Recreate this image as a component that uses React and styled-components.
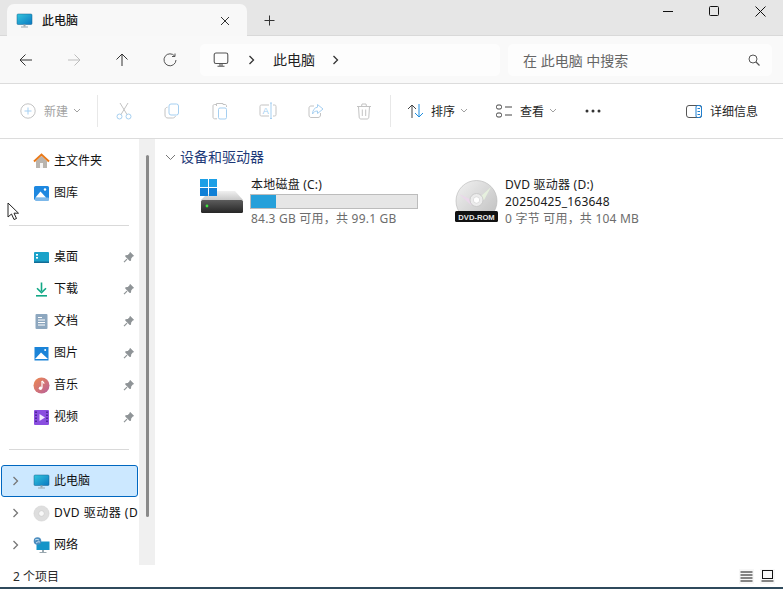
import React from 'react';
import styled, { createGlobalStyle } from 'styled-components';

const Global = createGlobalStyle`
  html, body { margin: 0; padding: 0; height: 100%; overflow: hidden; background: #fff; }
  #root { height: 100%; }
  * { box-sizing: border-box; }
  body { font-family: "Noto Sans", "Noto Sans CJK SC", sans-serif; font-size: 12px; color: #1a1a1a; }
`;

const Win = styled.div`
  position: relative; width: 783px; height: 589px; display: flex; flex-direction: column; overflow: hidden; background: #fff;
`;
const TitleBar = styled.div`
  height: 36px; background: #e6e6e6; border-bottom: 1px solid #d9d9d9; display: flex; align-items: flex-end; padding-left: 7px;
`;
const Tab = styled.div`
  width: 240px; height: 32px; margin-bottom: -1px; background: #f8f8f8; border-radius: 7px 7px 0 0;
  display: flex; align-items: center; padding: 1px 17px 0 9px; gap: 9px; font-size: 12px; color: #1a1a1a; font-weight: 500;
`;
const TabTitle = styled.span`flex: 1; line-height: 16px;`;
const NewTab = styled.div`
  width: 44px; height: 30px; display: flex; align-items: center; justify-content: center; padding-top: 1px;
`;
const WinControls = styled.div`
  margin-left: auto; align-self: flex-start; display: flex; padding-top: 2px;
`;
const WinBtn = styled.div`
  width: 46px; height: 18px; display: flex; align-items: center; justify-content: center;
`;
const NavBar = styled.div`
  height: 48px; background: #f9f9f9; border-bottom: 1px solid #dcdcdc; display: flex; align-items: center; padding: 1px 11px 0 2px;
`;
const NavBtn = styled.div`
  width: 48px; height: 32px; display: flex; align-items: center; justify-content: center;
`;
const Crumbs = styled.div`
  margin-left: 6px; width: 300px; height: 32px; background: #fdfdfd; border-radius: 5px; display: flex; align-items: center; padding-left: 13px;
  font-size: 14px; color: #1f1f1f;
`;
const CrumbText = styled.span`margin: 0 17px 0 18px; line-height: 18px;`;
const CrumbChevron = styled.span`display: flex; margin-left: 19px;`;
const Search = styled.div`
  margin-left: 8px; flex: 1; height: 32px; background: #fdfdfd; border-radius: 5px; display: flex; align-items: center; justify-content: space-between;
  padding: 0 12px 0 15px; color: #666; font-size: 14px;
`;
const CommandBar = styled.div`
  height: 55px; background: #fff; border-bottom: 1px solid #dcdcdc; display: flex; align-items: center; padding: 0 25px 0 20px;
`;
const CmdLabel = styled.span`
  font-size: 12px; line-height: 16px; color: ${p => p.$off ? '#a3a3a3' : '#262626'}; margin: 2px 0 0 ${p => p.$ml || 7}px; white-space: nowrap;
`;
const CmdGroup = styled.div`display: flex; align-items: center; margin-left: ${p => p.$ml || 0}px;`;
const CmdIcon = styled.div`
  width: 48px; display: flex; align-items: center; justify-content: center;
`;
const Sep = styled.div`width: 1px; height: 32px; background: #e8e8e8; margin: ${p => p.$m};`;
const Caret = styled.span`display: flex; margin-left: 5px;`;
const Spacer = styled.div`flex: 1;`;
const Body = styled.div`flex: 1; display: flex; min-height: 0; background: #fff;`;
const Side = styled.div`
  width: 139px; padding: 6px 1px 0 1px; display: flex; flex-direction: column; overflow: hidden;
`;
const Row = styled.div`
  height: 32px; flex: none; display: flex; align-items: center; padding-left: ${p => p.$tree ? 11 : 32}px; padding-right: 3px; border-radius: 3px;
  font-size: 12px; color: #111; white-space: nowrap; overflow: hidden;
  ${p => p.$sel && 'background:#cce8ff; border:1px solid #0067c0; padding-left:10px;'}
`;
const TreeRow = styled(Row)`padding-right: 0;`;
const RowIcon = styled.span`width: 17px; height: 17px; display: flex; align-items: center; justify-content: center; flex: none; margin-right: 4px;`;
const RowLabel = styled.span`flex: 1; line-height: 16px; overflow: hidden; letter-spacing: ${p => p.$wide ? '.5px' : '0'};`;
const Chevron = styled.span`width: 21px; display: flex; flex: none;`;
const Pin = styled.span`display: flex; justify-content: flex-end; width: 14px; flex: none;`;
const Divider = styled.div`height: 1px; background: #d9d9d9; margin: ${p => p.$m}; flex: none;`;
const Track = styled.div`
  width: 16px; background: #f0f0f0; display: flex; justify-content: center; padding-top: 16px;
`;
const Thumb = styled.div`width: 3px; height: 362px; background: #8a8a8a; border-radius: 2px;`;
const Content = styled.div`flex: 1; padding: 9px 0 0 10px; display: flex; flex-direction: column;`;
const GroupHead = styled.div`
  display: flex; align-items: center; color: #1e3a78; font-size: 14px; line-height: 18px; gap: 4px;
`;
const Drives = styled.div`display: flex; padding: 10px 0 0 35px;`;
const Drive = styled.div`display: flex; width: ${p => p.$w}px; gap: ${p => p.$gap}px;`;
const DriveGlyph = styled.div`flex: none; padding-top: ${p => p.$top}px; display: flex; align-items: flex-start;`;
const DriveInfo = styled.div`display: flex; flex-direction: column; font-size: 12px; line-height: 17px; color: #1a1a1a; letter-spacing: .22px;`;
const Bar = styled.div`
  width: 168px; height: 15px; background: #e6e6e6; border: 1px solid #bcbcbc; margin: 1px 0 1px -1px;
`;
const Fill = styled.div`height: 100%; background: #26a0da;`;
const Muted = styled.span`color: #6d6d6d;`;
const Status = styled.div`
  height: 24px; background: #fff; border-bottom: 2px solid #2f4a5c; display: flex; align-items: center; justify-content: space-between; padding: 0 8px 0 13px;
  font-size: 12px; color: #2a2a2a;
`;
const StatusIcons = styled.div`display: flex; gap: 6px; align-items: center;`;
const ViewBtn = styled.span`display: flex; width: 15px; height: 15px; background: #f7f7f7; align-items: center; justify-content: center;`;
const Cursor = styled.svg`position: absolute; left: 7px; top: 202px;`;

const S = ({ w = 16, h = 16, children, vb }) => <svg width={w} height={h} viewBox={vb || `0 0 ${w} ${h}`} fill="none">{children}</svg>;

const Monitor = ({ s = 17, id }) => (
  <svg width={s} height={s} viewBox="0 0 17 17">
    <defs><linearGradient id={id} x1="0" y1="0" x2="1" y2="1"><stop offset="0" stopColor="#34c6dd" /><stop offset="1" stopColor="#0a78c2" /></linearGradient></defs>
    <rect x="1" y="2" width="15" height="10.5" rx="1" fill={`url(#${id})`} stroke="#17618f" strokeWidth=".5" />
    <rect x="7.5" y="12.5" width="2" height="2" fill="#9aa8b0" />
    <rect x="5" y="14.5" width="7" height="1" fill="#9aa8b0" />
  </svg>
);
const ChevRight = ({ c = '#777' }) => <S w={7} h={10}><path d="M1.5 1L5.5 5L1.5 9" stroke={c} strokeWidth="1.3" /></S>;
const SmallCaret = ({ c = '#a0a0a0' }) => <S w={8} h={6}><path d="M1 1L4 4L7 1" stroke={c} strokeWidth="1" /></S>;
const PinIcon = () => (
  <S w={12} h={12}><path d="M7 .8L11.2 5L9.8 5.6L8.2 7.4L8 9.8L6.7 9.9L2.2 5.4L2.4 4.2L4.8 4L6.5 2.3Z" fill="#8f9497" /><path d="M4 8.2L1 11.2" stroke="#8f9497" strokeWidth="1.2" /></S>
);
const HomeIcon = () => (
  <S w={17} h={17}><path d="M3 8V15H14V8L8.5 3Z" fill="#b9b4ae" /><rect x="7" y="10" width="3" height="5" fill="#fff" opacity=".85" /><path d="M1 8.5L8.5 1.6L16 8.5" stroke="#e8791a" strokeWidth="2" /></S>
);
const GalleryIcon = () => (
  <S w={17} h={17}><rect x="1" y="1" width="15" height="14" rx="1.5" fill="#1e88e0" /><rect x="2" y="12.5" width="14" height="3.5" rx="1" fill="#7cb8ea" /><path d="M2.5 12.5L7.5 6.5L13 12.5Z" fill="#fff" /><circle cx="12" cy="4.5" r="1.2" fill="#fff" /></S>
);
const DesktopIcon = () => (
  <S w={17} h={17}><rect x="1" y="3" width="15" height="11" rx="1" fill="#1ba2c9" /><rect x="1" y="12.5" width="15" height="1.5" fill="#126c96" /><rect x="3" y="5" width="2" height="1.6" fill="#fff" /><rect x="3" y="8" width="2" height="1.6" fill="#fff" /></S>
);
const DownloadIcon = () => (
  <S w={17} h={17}><path d="M8.5 1.5V10" stroke="#12a886" strokeWidth="1.6" /><path d="M4 7.2L8.5 11.6L13 7.2" stroke="#12a886" strokeWidth="1.6" /><rect x="3" y="14" width="11" height="1.6" fill="#12a886" /></S>
);
const DocIcon = () => (
  <S w={17} h={17}><rect x="2.5" y="1" width="12" height="15" rx="1" fill="#8da7bf" /><path d="M5 4.5H9M5 7H12M5 9.5H12M5 12H12" stroke="#fff" strokeWidth="1" /></S>
);
const PicIcon = () => (
  <S w={17} h={17}><rect x="1.5" y="2" width="14" height="13.5" fill="#1b84d8" /><path d="M2 14L8 7.5L15 14Z" fill="#fff" /><circle cx="12.2" cy="5" r="1" fill="#fff" /></S>
);
const MusicIcon = () => (
  <S w={17} h={17}>
    <defs><linearGradient id="mus" x1="0" y1="0" x2="1" y2="1"><stop offset="0" stopColor="#ef8a4e" /><stop offset="1" stopColor="#b75f9c" /></linearGradient></defs>
    <circle cx="8.5" cy="8.5" r="8" fill="url(#mus)" /><path d="M9 4V11" stroke="#fff" strokeWidth="1.2" /><circle cx="7.5" cy="11.2" r="1.7" fill="#fff" /><path d="M9 4C10 5 11 5 11 6.8" stroke="#fff" strokeWidth="1.2" />
  </S>
);
const VideoIcon = () => (
  <S w={17} h={17}><rect x="1" y="1" width="15" height="15" rx="1" fill="#8a4ee0" /><path d="M6.5 5L12 8.5L6.5 12Z" fill="#f1e9fd" /><path d="M3 2.5V14.5M14 2.5V14.5" stroke="#3d1c86" strokeWidth="1.5" strokeDasharray="1.5 1.5" /></S>
);
const DiscSmall = () => (
  <S w={17} h={17}><circle cx="8.5" cy="8.5" r="7.6" fill="#dedede" stroke="#cfcfcf" strokeWidth=".5" /><circle cx="8.5" cy="8.5" r="2.8" fill="#f8f8f8" stroke="#c6c6c6" strokeWidth=".6" /></S>
);
const NetIcon = () => (
  <S w={17} h={17}><rect x="3.5" y="4.5" width="13" height="8.5" fill="#1394c8" /><rect x="9" y="13" width="2" height="2" fill="#9aa8b0" /><rect x="6.5" y="15" width="7" height="1" fill="#9aa8b0" /><circle cx="4.5" cy="4" r="3.8" fill="#4c8dbf" /><path d="M2 3Q4 1.5 6 3M3 6Q5 4 7 5" stroke="#cfe4f2" strokeWidth=".9" /></S>
);

const PcOutline = () => (
  <S w={16} h={16}><rect x="1.2" y="1" width="13.6" height="10.5" rx="1.8" stroke="#555" strokeWidth="1.1" /><path d="M7 11.5V14M9 11.5V14M4.5 14.3H11.5" stroke="#555" strokeWidth="1.1" /></S>
);

const blue = '#a5cff1';
const gray = '#c3c3c3';

const Cut = () => (
  <S w={16} h={18}><circle cx="3.5" cy="14.5" r="2.5" stroke={blue} strokeWidth="1" /><circle cx="12.5" cy="14.5" r="2.5" stroke={blue} strokeWidth="1" /><path d="M5 12.5L12 1M11 12.5L4 1" stroke={gray} strokeWidth="1" /></S>
);
const Copy = () => (
  <S w={16} h={16}><rect x="5" y="1" width="9.5" height="11" rx="2" stroke={blue} strokeWidth="1" /><path d="M3.5 4.2C2 4.5 1 5.3 1 6.8V12C1 14 2.2 15 4 15H8.5C10 15 11 14.4 11.5 13" stroke={gray} strokeWidth="1" /></S>
);
const Paste = () => (
  <S w={16} h={18}><path d="M5 2.5H2.5C1.5 2.5 1 3 1 4V15C1 16 1.5 16.8 2.5 16.8H5" stroke={gray} strokeWidth="1" /><path d="M4.5 4V1.5H11V2.5H13C14 2.5 14.5 3 14.5 4V5" stroke={gray} strokeWidth="1" /><rect x="6.5" y="6" width="8" height="11" rx="1.5" stroke={blue} strokeWidth="1" /></S>
);
const Rename = () => (
  <S w={18} h={18}><path d="M10 3H2.5C1.5 3 1 3.5 1 4.5V12.5C1 13.5 1.5 14 2.5 14H10" stroke={gray} strokeWidth="1" /><path d="M14 3H15.5C16.5 3 17 3.5 17 4.5V12.5C17 13.5 16.5 14 15.5 14H14" stroke={gray} strokeWidth="1" /><path d="M11 1H13M12 1V16.5M11 16.5H13" stroke={blue} strokeWidth="1" /><text x="3.4" y="12" fontSize="9.5" fontFamily="Liberation Sans" fill={blue}>A</text></S>
);
const Share = () => (
  <S w={16} h={16}><path d="M6 3H3C1.8 3 1 3.8 1 5V12C1 13.5 1.8 14.5 3 14.5H10C11.5 14.5 12.5 13.5 12.5 12V10" stroke={gray} strokeWidth="1" /><path d="M9.5 1.5L15 6L9.5 10.5V8C7 8 5.5 9 4.5 11C4.5 7.5 6.5 4.5 9.5 4.2Z" stroke={blue} strokeWidth="1" /></S>
);
const Trash = () => (
  <S w={16} h={17}><path d="M1 3.5H15M5.5 3.5L6 1H10L10.5 3.5M2.5 3.5L3.2 14.2C3.3 15.4 4 16 5 16H11C12 16 12.7 15.4 12.8 14.2L13.5 3.5M6.3 6.5V13M9.7 6.5V13" stroke={gray} strokeWidth="1" /></S>
);

const nav = [
  ['主文件夹', <HomeIcon />], ['图库', <GalleryIcon />],
];
const pinned = [
  ['桌面', <DesktopIcon />], ['下载', <DownloadIcon />], ['文档', <DocIcon />],
  ['图片', <PicIcon />], ['音乐', <MusicIcon />], ['视频', <VideoIcon />],
];

const HddIcon = () => (
  <svg width="46" height="36" viewBox="0 0 46 36">
    <defs>
      <linearGradient id="hddf" x1="0" y1="0" x2="0" y2="1"><stop offset="0" stopColor="#5c5c5c" /><stop offset="1" stopColor="#262626" /></linearGradient>
      <linearGradient id="hddt" x1="0" y1="0" x2="0" y2="1"><stop offset="0" stopColor="#f0f0f0" /><stop offset="1" stopColor="#c8c8c8" /></linearGradient>
    </defs>
    <path d="M16 12H35L43 21H1L6 16Z" fill="url(#hddt)" />
    <rect x="1" y="21" width="42" height="13" rx="1.5" fill="url(#hddf)" />
    <circle cx="7" cy="27" r="1.4" fill="#3fe03f" />
    <rect x="0" y="0" width="8" height="8" fill="#1c9fe6" /><rect x="9" y="0" width="8" height="8" fill="#1c9fe6" />
    <rect x="0" y="9" width="8" height="8" fill="#0f7fd6" /><rect x="9" y="9" width="8" height="8" fill="#0f7fd6" />
  </svg>
);
const DvdIcon = () => (
  <svg width="43" height="42" viewBox="0 0 43 42">
    <defs><linearGradient id="dvdg" x1="0" y1="0" x2="1" y2="1"><stop offset="0" stopColor="#f2f2f2" /><stop offset="1" stopColor="#bdbdbd" /></linearGradient></defs>
    <circle cx="21.5" cy="21" r="20.5" fill="url(#dvdg)" stroke="#b5b5b5" strokeWidth=".6" />
    <path d="M4 14L19 21L16 25Z" fill="#ead8ea" /><path d="M36 7L24 18L29 20Z" fill="#e6f0de" />
    <circle cx="21.5" cy="20" r="6.5" fill="#ececec" stroke="#c4c4c4" strokeWidth=".8" /><circle cx="21.5" cy="20" r="3.2" fill="#fff" stroke="#cccccc" strokeWidth=".6" />
    <rect x="0" y="31" width="43" height="11" rx="1.5" fill="#111" />
    <text x="21.5" y="39.5" fontSize="7.6" fontWeight="700" fontFamily="Liberation Sans" fill="#e6e6e6" textAnchor="middle">DVD-ROM</text>
  </svg>
);

const used = 84.3, total = 99.1, inner = 166;

export default function App() {
  return (
    <Win>
      <Global />
      <TitleBar>
        <Tab>
          <Monitor id="tabm" />
          <TabTitle>此电脑</TabTitle>
          <S w={10} h={10}><path d="M1 1L9 9M9 1L1 9" stroke="#333" strokeWidth="1" /></S>
        </Tab>
        <NewTab><S w={11} h={11}><path d="M5.5 .5V10.5M.5 5.5H10.5" stroke="#333" strokeWidth="1" /></S></NewTab>
        <WinControls>
          <WinBtn><S w={10} h={10}><path d="M0 5.5H10" stroke="#111" strokeWidth="1" /></S></WinBtn>
          <WinBtn><S w={10} h={10}><rect x=".5" y=".5" width="9" height="9" rx="1" stroke="#111" strokeWidth="1" /></S></WinBtn>
          <WinBtn><S w={11} h={11}><path d="M.5 .5L10.5 10.5M10.5 .5L.5 10.5" stroke="#111" strokeWidth="1" /></S></WinBtn>
        </WinControls>
      </TitleBar>
      <NavBar>
        <NavBtn><S w={14} h={14}><path d="M13 7H1M6.5 1.5L1 7L6.5 12.5" stroke="#333" strokeWidth="1" /></S></NavBtn>
        <NavBtn><S w={14} h={14}><path d="M1 7H13M7.5 1.5L13 7L7.5 12.5" stroke="#bdbdbd" strokeWidth="1" /></S></NavBtn>
        <NavBtn><S w={14} h={14}><path d="M7 13V1M1.5 6.5L7 1L12.5 6.5" stroke="#333" strokeWidth="1" /></S></NavBtn>
        <NavBtn><S w={14} h={14}><path d="M11.8 3.2A6 6 0 1 0 13 7" stroke="#555" strokeWidth="1" /><path d="M12 .5V3.5H9" stroke="#555" strokeWidth="1" /></S></NavBtn>
        <Crumbs>
          <PcOutline />
          <CrumbChevron><ChevRight c="#333" /></CrumbChevron>
          <CrumbText>此电脑</CrumbText>
          <ChevRight c="#333" />
        </Crumbs>
        <Search>
          <span>在 此电脑 中搜索</span>
          <S w={12} h={12}><circle cx="5" cy="5" r="4" stroke="#555" strokeWidth="1" /><path d="M8 8L11.5 11.5" stroke="#555" strokeWidth="1.2" /></S>
        </Search>
      </NavBar>
      <CommandBar>
        <CmdGroup>
          <S w={16} h={16}><circle cx="8" cy="8" r="7.2" stroke={gray} strokeWidth="1" /><path d="M8 4.5V11.5M4.5 8H11.5" stroke={blue} strokeWidth="1" /></S>
          <CmdLabel $off $ml={8}>新建</CmdLabel>
          <Caret><SmallCaret /></Caret>
        </CmdGroup>
        <Sep $m="0 2px 0 16px" />
        <CmdIcon><Cut /></CmdIcon>
        <CmdIcon><Copy /></CmdIcon>
        <CmdIcon><Paste /></CmdIcon>
        <CmdIcon><Rename /></CmdIcon>
        <CmdIcon><Share /></CmdIcon>
        <CmdIcon><Trash /></CmdIcon>
        <Sep $m="0 16px 0 2px" />
        <CmdGroup>
          <S w={17} h={16}><path d="M5 15V2M1 6L5 2L9 6" stroke="#444" strokeWidth="1" /><path d="M12 1V14M8 10L12 14L16 10" stroke="#1f8ee0" strokeWidth="1" /></S>
          <CmdLabel $ml={7}>排序</CmdLabel>
          <Caret><SmallCaret /></Caret>
        </CmdGroup>
        <CmdGroup $ml={28}>
          <S w={17} h={14}><rect x=".5" y="1" width="5" height="4" rx="1.5" stroke="#444" strokeWidth="1" /><rect x=".5" y="9" width="5" height="4" rx="1.5" stroke="#444" strokeWidth="1" /><path d="M9 3H16M9 11H16" stroke="#444" strokeWidth="1" /></S>
          <CmdLabel $ml={7}>查看</CmdLabel>
          <Caret><SmallCaret /></Caret>
        </CmdGroup>
        <CmdGroup $ml={28}>
          <S w={16} h={4}><circle cx="2" cy="2" r="1.5" fill="#333" /><circle cx="8" cy="2" r="1.5" fill="#333" /><circle cx="14" cy="2" r="1.5" fill="#333" /></S>
        </CmdGroup>
        <Spacer />
        <CmdGroup>
          <S w={16} h={13}><rect x=".5" y=".5" width="15" height="12" rx="2.5" stroke="#555" strokeWidth="1" /><rect x="10" y=".5" width="5.5" height="12" rx="1.5" stroke="#1f7fd0" strokeWidth="1" /><path d="M11.5 3.5H14M11.5 6.5H14M11.5 9.5H14" stroke="#1f7fd0" strokeWidth="1" /></S>
          <CmdLabel $ml={8}>详细信息</CmdLabel>
        </CmdGroup>
      </CommandBar>
      <Body>
        <Side>
          {nav.map(([t, i]) => <Row key={t}><RowIcon>{i}</RowIcon><RowLabel>{t}</RowLabel></Row>)}
          <Divider $m="16px 9px 15px 8px" />
          {pinned.map(([t, i]) => <Row key={t}><RowIcon>{i}</RowIcon><RowLabel>{t}</RowLabel><Pin><PinIcon /></Pin></Row>)}
          <Divider $m="16px 9px 15px 8px" />
          <TreeRow $tree $sel><Chevron><ChevRight /></Chevron><RowIcon><Monitor id="sidem" /></RowIcon><RowLabel>此电脑</RowLabel></TreeRow>
          <TreeRow $tree><Chevron><ChevRight /></Chevron><RowIcon><DiscSmall /></RowIcon><RowLabel $wide>DVD 驱动器 (D:)</RowLabel></TreeRow>
          <TreeRow $tree><Chevron><ChevRight /></Chevron><RowIcon><NetIcon /></RowIcon><RowLabel>网络</RowLabel></TreeRow>
        </Side>
        <Track><Thumb /></Track>
        <Content>
          <GroupHead>
            <S w={11} h={7}><path d="M1 1L5.5 5.5L10 1" stroke="#777" strokeWidth="1" /></S>
            <span>设备和驱动器</span>
          </GroupHead>
          <Drives>
            <Drive $w={255} $gap={5}>
              <DriveGlyph $top={3}><HddIcon /></DriveGlyph>
              <DriveInfo>
                <span>本地磁盘 (C:)</span>
                <Bar><Fill style={{ width: Math.round((1 - used / total) * inner) }} /></Bar>
                <Muted>84.3 GB 可用，共 99.1 GB</Muted>
              </DriveInfo>
            </Drive>
            <Drive $w={200} $gap={7}>
              <DriveGlyph $top={4}><DvdIcon /></DriveGlyph>
              <DriveInfo>
                <span>DVD 驱动器 (D:)</span>
                <span>20250425_163648</span>
                <Muted>0 字节 可用，共 104 MB</Muted>
              </DriveInfo>
            </Drive>
          </Drives>
        </Content>
      </Body>
      <Status>
        <span>2 个项目</span>
        <StatusIcons>
          <ViewBtn><S w={13} h={11}><path d="M.5 1H12.5M.5 4H12.5M.5 7H12.5M.5 10H12.5" stroke="#111" strokeWidth="1" /></S></ViewBtn>
          <ViewBtn><S w={13} h={12}><rect x="1.5" y=".5" width="10" height="8" stroke="#111" strokeWidth="1" /><path d="M.5 11H12.5" stroke="#111" strokeWidth="1" /></S></ViewBtn>
        </StatusIcons>
      </Status>
      <Cursor width="13" height="19" viewBox="0 0 13 19"><path d="M1 1V15L4.5 12L7 17.5L9.5 16.5L7 11.2H11.5Z" fill="#fff" stroke="#222" strokeWidth="1" /></Cursor>
    </Win>
  );
}
